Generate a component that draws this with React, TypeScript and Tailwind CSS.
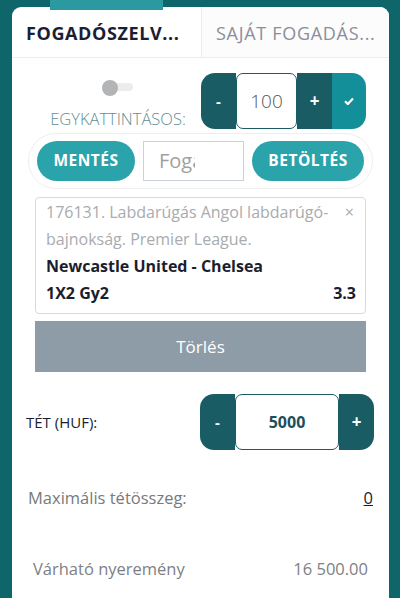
import React from 'react';

const font = { fontFamily: '"Open Sans", "Liberation Sans", sans-serif' };

const Stepper = ({ value, bold, withCheck, inputW }: { value: string; bold?: boolean; withCheck?: boolean; inputW: string }) => {
    return (
        <div className='flex h-[56px] rounded-[14px] overflow-hidden'>
            <div className='w-[35px] bg-[#1a5c64] flex items-center justify-center text-white text-[15px] font-bold'>-</div>
            <div className={`${inputW} bg-white border border-[#1a5c64] rounded-[7px] flex items-center justify-center ${bold ? 'text-[#1d4f5b] font-bold text-[16px]' : 'text-[#555] font-light text-[19px]'}`}>
                {value}
            </div>
            <div className='w-[35px] bg-[#1a5c64] flex items-center justify-center text-white text-[17px] font-bold'>+</div>
            {withCheck && (
                <div className='w-[34px] bg-[#138f9a] flex items-center justify-center'>
                    <svg width='10' height='8' viewBox='0 0 10 8'>
                        <path d='M1 4.2 L3.8 7 L9 1.4' stroke='white' strokeWidth='2.2' fill='none' />
                    </svg>
                </div>
            )}
        </div>
    );
};

const App = () => {
    return (
        <div className='min-h-[598px] h-[598px] overflow-hidden bg-[#0e656a] pt-[7px]' style={font}>
            <div className='relative ml-[12px] mr-[11px] h-[700px] bg-white rounded-t-[9px]'>
                <div className='absolute left-[38px] top-[-7px] w-[113px] h-[10px] bg-[#2a9aa0]' />
                {/* tabs */}
                <div className='flex h-[51px] border-b border-[#ececec]'>
                    <div className='w-[189px] pl-[14px] flex items-center pt-[2px] text-[18px] font-bold tracking-[0.6px] text-[#1b1e33] whitespace-nowrap'>
                        FOGADÓSZELV...
                    </div>
                    <div className='flex-1 pl-[14px] flex items-center pt-[2px] border-l border-[#ececec] bg-[#fcfcfc] rounded-tr-[9px] text-[18px] tracking-[0.7px] text-[#8b8e9b] whitespace-nowrap'>
                        SAJÁT FOGADÁS...
                    </div>
                </div>

                {/* one click row */}
                <div className='flex pl-[23px] pr-[23px] mt-[15px]'>
                    <div className='flex-1 flex flex-col items-center'>
                        <div className='relative w-[31px] h-[14px] mt-[7px] -ml-[2px]'>
                            <div className='absolute left-[3px] top-[3px] w-[28px] h-[8px] rounded-full bg-[#ececec]' />
                            <div className='absolute left-0 top-0 w-[16px] h-[16px] rounded-full bg-[#b3b4b5]' />
                        </div>
                        <div className='mt-[15px] text-[16.5px] font-light text-[#5f8f94] leading-[20px]'>EGYKATTINTÁSOS:</div>
                    </div>
                    <Stepper value='100' withCheck inputW='w-[61px]' />
                </div>

                {/* save row */}
                <div className='mx-[16px] mt-[4px] h-[56px] rounded-full border border-[#eeeeee] flex items-center gap-[8px] px-[8px]'>
                    <div className='w-[98px] h-[40px] rounded-full bg-[#2ba3ab] text-white font-bold text-[15.5px] tracking-[0.5px] flex items-center justify-center'>MENTÉS</div>
                    <div className='w-[101px] h-[40px] border-[1.5px] border-[#c9d1da] flex items-center pl-[15px] text-[20px] text-[#9f9f9f]'>
                        <span className='w-[36px] overflow-hidden whitespace-nowrap'>Fogadás</span>
                    </div>
                    <div className='flex-1 h-[40px] rounded-full bg-[#2ba3ab] text-white font-bold text-[15.5px] tracking-[0.5px] flex items-center justify-center'>BETÖLTÉS</div>
                </div>

                {/* bet item */}
                <div className='mx-[23px] mt-[8px] border border-[#c8ddef] rounded-[4px] pl-[10px] pr-[9px] pt-[1px] pb-[6px] text-[16px] leading-[27px]'>
                    <div className='flex justify-between text-[#a9abae]'>
                        <div>176131. Labdarúgás Angol labdarúgó-<br />bajnokság. Premier League.</div>
                        <div className='text-[16px] pr-[2px]'>×</div>
                    </div>
                    <div className='font-bold text-[#1b1e2e]'>Newcastle United - Chelsea</div>
                    <div className='flex justify-between font-bold text-[#1b1e2e]'>
                        <span>1X2 Gy2</span>
                        <span>3.3</span>
                    </div>
                </div>

                <div className='mx-[23px] mt-[7px] h-[51px] bg-[#8e9ca7] text-white text-[17px] flex items-center justify-center'>Törlés</div>

                {/* stake */}
                <div className='flex items-center justify-between pl-[14px] pr-[15px] mt-[22px]'>
                    <div className='text-[15px] text-[#1b1e2e]'>TÉT (HUF):</div>
                    <Stepper value='5000' bold inputW='w-[104px]' />
                </div>

                <div className='flex justify-between items-center pl-[16px] pr-[16px] mt-[36px] text-[16.5px] text-[#777a7d]'>
                    <span>Maximális tétösszeg:</span>
                    <span className='underline text-[#1b1e2e]'>0</span>
                </div>

                <div className='flex justify-between items-center pl-[21px] pr-[21px] mt-[46px] text-[16.5px] text-[#7d8084]'>
                    <span>Várható nyeremény</span>
                    <span>16 500.00</span>
                </div>
            </div>
        </div>
    );
};

export default App;
